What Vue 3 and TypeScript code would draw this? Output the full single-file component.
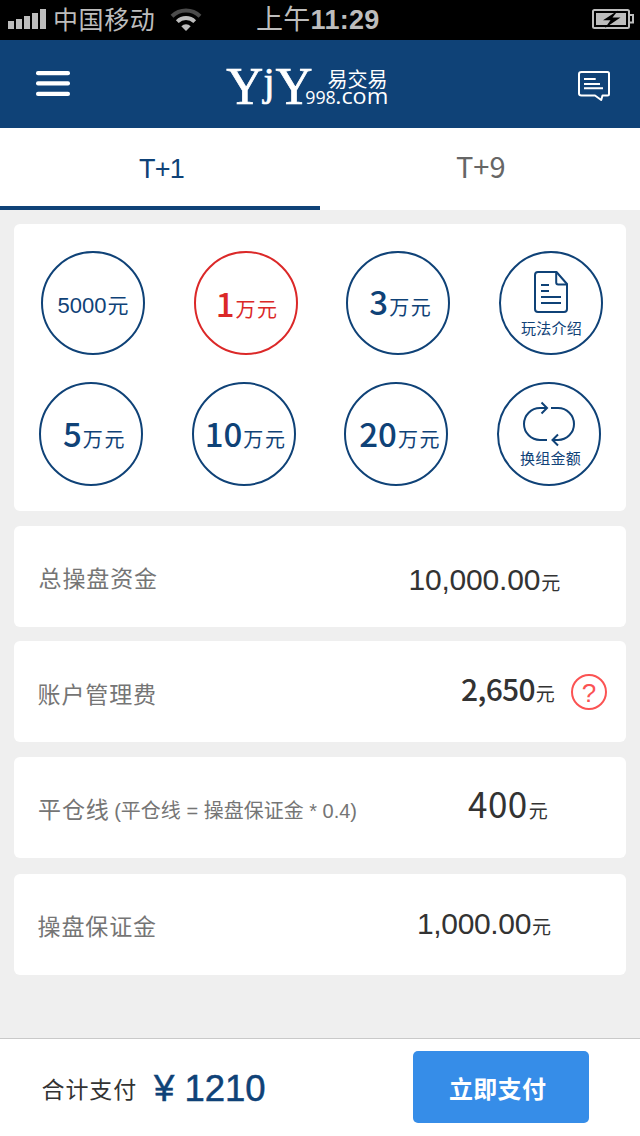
<script setup lang="ts">
import { ref } from 'vue'

interface Amount { key: string; num: string; unit: string }
interface Row { key: string; label: string; note?: string; value: string; help?: boolean }

const amountsTop: Amount[] = [
  { key: 'a5k', num: '5000', unit: '元' },
  { key: 'a1', num: '1', unit: '万元' },
  { key: 'a3', num: '3', unit: '万元' },
]
const amountsBottom: Amount[] = [
  { key: 'a5', num: '5', unit: '万元' },
  { key: 'a10', num: '10', unit: '万元' },
  { key: 'a20', num: '20', unit: '万元' },
]
const rows: Row[] = [
  { key: 'total', label: '总操盘资金', value: '10,000.00' },
  { key: 'fee', label: '账户管理费', value: '2,650', help: true },
  { key: 'close', label: '平仓线', note: '(平仓线 = 操盘保证金 * 0.4)', value: '400' },
  { key: 'deposit', label: '操盘保证金', value: '1,000.00' },
]
const selected = ref('a1')
</script>

<template>
  <div class="screen">
    <div class="status">
      <svg class="signal" width="40" height="40" viewBox="0 0 40 40" fill="#bdbdbd">
        <rect x="0" y="21" width="6" height="8" /><rect x="8" y="19" width="6" height="10" />
        <rect x="16" y="16" width="6" height="13" /><rect x="24" y="13" width="6" height="16" />
        <rect x="32" y="9" width="6" height="20" />
      </svg>
      <span class="carrier">中国移动</span>
      <svg class="wifi" width="32" height="40" viewBox="0 0 32 40" fill="none">
        <path d="M2 16.2A20 20 0 0 1 30 16.2" stroke="#4b4b4b" stroke-width="4" />
        <path d="M7.3 21.6A12.6 12.6 0 0 1 24.7 21.6" stroke="#bdbdbd" stroke-width="4" />
        <path d="M11.3 26.2A6.8 6.8 0 0 1 20.7 26.2L16 31Z" fill="#bdbdbd" />
      </svg>
      <span class="clock"><span class="ampm">上午</span>11:29</span>
      <svg class="battery" width="44" height="40" viewBox="0 0 44 40">
        <rect x="1" y="10" width="36" height="18" rx="1.5" fill="none" stroke="#bdbdbd" stroke-width="2" />
        <path d="M38 15H41V22.5H38" fill="none" stroke="#bdbdbd" stroke-width="2" />
        <rect x="4" y="13" width="30" height="12" fill="#bdbdbd" />
        <path d="M26 10.5L11 20.3H18.5L13 28L28.5 17.4H20.5Z" fill="#000" />
      </svg>
    </div>

    <header class="header">
      <svg class="menu" width="34" height="26" viewBox="0 0 34 26" fill="#fff">
        <rect y="0" width="34" height="4.3" rx="2" /><rect y="10.3" width="34" height="4.3" rx="2" />
        <rect y="20.8" width="34" height="4.3" rx="2" />
      </svg>
      <svg class="logo" width="170" height="70" viewBox="0 -10 170 70" fill="#fff">
        <g class="serif" stroke="#fff" stroke-width=".7">
          <text x="6.3" y="44" font-size="52" textLength="37" lengthAdjust="spacingAndGlyphs">Y</text>
          <text x="43.5" y="35" font-size="40">j</text>
          <text x="55.5" y="44" font-size="52" textLength="37" lengthAdjust="spacingAndGlyphs">Y</text>
        </g>
        <text class="cn" x="107.5" y="26.5" font-size="20">易交易</text>
        <text class="latin" x="85.3" y="44" font-size="18" textLength="30.5" lengthAdjust="spacingAndGlyphs">998</text>
        <text class="latin" x="115.3" y="44" font-size="21" textLength="53" lengthAdjust="spacingAndGlyphs">.com</text>
      </svg>
      <svg class="chat" width="34" height="32" viewBox="0 0 34 32" fill="none" stroke="#fff" stroke-width="2">
        <path d="M3.5 1H29.5Q31 1 31 2.5V23Q31 24.5 29.5 24.5H24.5L23.2 29L17 24.5H3.5Q1 24.5 1 22.5V3Q1 1 3.5 1Z" stroke-linejoin="round" />
        <path d="M6 8H17.7M6 13H22M6 17.3H25" />
      </svg>
    </header>

    <nav class="tabs">
      <div class="tab active"><span>T+1</span></div>
      <div class="tab other"><span>T+9</span></div>
    </nav>

    <main class="content">
      <section class="card picker">
        <div class="line">
          <div v-for="a in amountsTop" :key="a.key" class="circle" :class="[a.key, { on: selected === a.key }]" @click="selected = a.key">
            <span class="num">{{ a.num }}</span><span class="unit">{{ a.unit }}</span>
          </div>
          <div class="circle action">
            <svg class="doc" width="34" height="42" viewBox="0 0 34 42" fill="none" stroke="currentColor" stroke-width="2">
              <path d="M22.5 1H4Q1 1 1 4V38Q1 41 4 41H30Q33 41 33 38V13Z" stroke-linejoin="round" />
              <path d="M22.2 1V11.5Q22.2 13.5 24.2 13.5H33M7 14H15M7 20H15M7 26H27M7 32H27" />
            </svg>
            <span class="caption">玩法介绍</span>
          </div>
        </div>
        <div class="line second">
          <div v-for="a in amountsBottom" :key="a.key" class="circle" :class="[a.key, { on: selected === a.key }]" @click="selected = a.key">
            <span class="num">{{ a.num }}</span><span class="unit">{{ a.unit }}</span>
          </div>
          <div class="circle action swap">
            <svg class="loop" width="54" height="48" viewBox="0 0 54 48" fill="none" stroke="currentColor" stroke-width="2">
              <path d="M24.5 8H18A16 16 0 0 0 18 40H25M29 8H36A16 16 0 0 1 36 40H31" />
              <path d="M19.5 2.5L25 8L19.5 13.5M36 34.5L30.5 40L36 45.5" />
            </svg>
            <span class="caption">换组金额</span>
          </div>
        </div>
      </section>

      <section v-for="r in rows" :key="r.key" class="card row" :class="r.key">
        <div class="label">{{ r.label }}<span v-if="r.note" class="note">{{ r.note }}</span></div>
        <div class="value"><span class="figure">{{ r.value }}</span><span>元</span></div>
        <div v-if="r.help" class="help">?</div>
      </section>
    </main>

    <footer class="footer">
      <span class="sumlabel">合计支付</span>
      <span class="sum">¥ 1210</span>
      <button class="pay">立即支付</button>
    </footer>
  </div>
</template>

<style>
body { margin: 0; }
</style>

<style scoped>
.screen {
  width: 640px; height: 1136px; display: flex; flex-direction: column; overflow: hidden;
  background: #efefef; font-family: "Liberation Sans", "Noto Sans CJK SC", sans-serif; white-space: nowrap;
}
.screen * { box-sizing: border-box; }
svg { display: block; flex: none; }
.status { height: 40px; background: #000; color: #bdbdbd; display: flex; flex: none; }
.signal { margin-left: 8px; }
.carrier { flex: none; width: 122px; padding-left: 5px; font-size: 25px; letter-spacing: .6px; line-height: 41px; }
.clock { flex: none; width: 390px; padding-left: 54px; font-size: 27px; font-weight: 700; letter-spacing: .3px; line-height: 40px; }
.ampm { font-weight: 400; }

.header { height: 88px; background: #0f4277; display: flex; flex: none; align-items: flex-start; }
.menu { margin: 31px 0 0 36px; }
.logo { margin: 10px 0 0 150px; }
.chat { margin: 31px 0 0 188px; }
.serif { font-family: "Liberation Serif", serif; }
.cn { font-family: "Noto Sans CJK SC", sans-serif; }
.latin { font-family: "Open Sans", sans-serif; }

.tabs { height: 82px; background: #fff; display: flex; flex: none; }
.tab { flex: none; width: 320px; color: #666; }
.active { color: #0f4277; border-bottom: 4px solid #0f4277; font-size: 27px; letter-spacing: -.7px; padding-left: 139px; line-height: 82px; }
.other { font-family: "Noto Sans CJK SC", sans-serif; font-size: 29px; padding-left: 136px; line-height: 75px; }

.content { flex: 1; padding: 14px 14px 0; }
.card { background: #fff; border-radius: 6px; }
.picker { height: 287px; padding: 27px 0 0 27px; }
.line { display: grid; grid-template-columns: repeat(4, 104px); column-gap: 48.67px; }
.second { margin: 27px 0 0 -2px; }
.circle {
  width: 104px; height: 104px; border: 2px solid #0f4277; border-radius: 50%; color: #0f4277;
  font-size: 20px; line-height: 112px;
}
.circle span { line-height: 1; }
.on { color: #db2828; border-color: #db2828; }
.num { font-family: "Noto Sans CJK SC", sans-serif; font-size: 33px; font-weight: 500; }
.unit { font-size: 20px; letter-spacing: 1.6px; margin-left: 1px; }
.a5k { padding-left: 14.5px; line-height: 107px; }
.a5k .num { font-family: "Liberation Sans", sans-serif; font-size: 22px; font-weight: 400; }
.a5k .unit { font-size: 21px; }
.a1 { padding-left: 20px; line-height: 115px; }
.a3 { padding-left: 21px; line-height: 111px; }
.a5 { padding-left: 22px; }
.a10 { padding-left: 11px; line-height: 113px; }
.a20 { padding-left: 13px; line-height: 113px; }
.action { display: flex; flex-direction: column; }
.doc { margin: 18px 0 0 33px; }
.circle .caption { margin: 8px 0 0 20px; font-size: 15px; letter-spacing: .3px; line-height: 15px; }
.loop { margin: 16px 0 0 23px; }
.circle.swap .caption { margin-top: 3px; margin-left: 21px; }

.row { height: 101px; margin-top: 15px; display: flex; align-items: flex-start; }
.fee { margin-top: 14px; }
.deposit { margin-top: 16px; }
.label { flex: none; padding-left: 24.5px; font-size: 23px; letter-spacing: .9px; color: #757575; line-height: 107px; width: 394.5px; }
.note { font-size: 20px; letter-spacing: 0; margin-left: 4.5px; line-height: 1; }
.value { font-size: 19px; color: #333; line-height: 115px; }
.value span { line-height: 1; }
.figure { font-size: 30px; letter-spacing: -.2px; margin-right: 1px; }
.fee .label { width: 447px; padding-left: 23.5px; line-height: 108px; }
.fee .value { line-height: 108.5px; width: 110px; }
.fee .figure { font-family: "Noto Sans CJK SC", sans-serif; font-weight: 500; letter-spacing: -.7px; }
.close .label { width: 454px; line-height: 107px; padding-left: 24px; }
.close .value { line-height: 109px; }
.close .figure { font-family: "Noto Sans CJK SC", sans-serif; font-size: 35px; letter-spacing: .5px; }
.deposit .label { width: 403px; padding-left: 23.5px; line-height: 106px; }
.deposit .value { line-height: 107px; }
.deposit .figure { letter-spacing: -.35px; }
.help {
  width: 36px; height: 36px; margin-top: 33px; border: 2px solid #fb5353; border-radius: 50%;
  color: #fb5353; font: 26px/34px "Liberation Sans", sans-serif; text-align: center;
}

.footer { height: 98px; flex: none; border-top: 1px solid #c9c9c9; background: #fff; display: flex; align-items: flex-start; }
.sumlabel { width: 154px; padding-left: 41.5px; font-size: 23px; letter-spacing: .9px; color: #333; line-height: 102px; }
.sum { width: 259px; font-size: 36.5px; color: #0f4277; line-height: 99px; -webkit-text-stroke: .5px #0f4277; }
.pay {
  width: 176px; height: 72px; margin-top: 12px; padding: 0 0 0 36px; border: 0; border-radius: 5px; background: #368de8;
  color: #fff; font: 700 24px/77px "Liberation Sans", "Noto Sans CJK SC", sans-serif; letter-spacing: .3px; text-align: left;
}
</style>
